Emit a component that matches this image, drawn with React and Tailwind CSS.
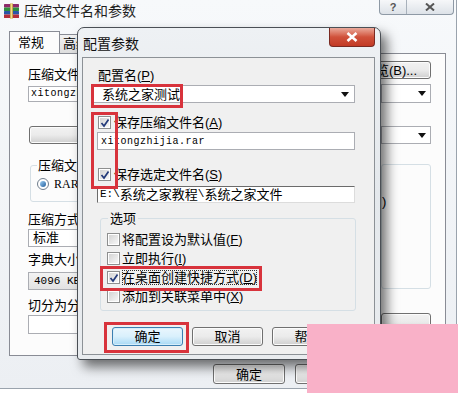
import React from 'react';

const Check = ({ checked }) => (
  <span className="relative w-[13px] h-[13px] shrink-0 border border-[#8e8f8f] bg-white">
    <span className="absolute inset-[1px] bg-gradient-to-br from-[#d4d4d4] to-[#f7f7f7]" />
    {checked && (
      <svg className="absolute left-[1px] top-[1px]" width="10" height="10" viewBox="0 0 10 10">
        <path d="M1.5 5 L4 8 L8.5 1.5" stroke="#233a7a" strokeWidth="1.7" fill="none" />
      </svg>
    )}
  </span>
);

const Btn = ({ children, def, className = '' }) => (
  <div
    className={
      'flex items-center justify-center rounded-[3px] border text-[13px] leading-[15px] text-black ' +
      (def
        ? 'border-[#3c7fb1] bg-gradient-to-b from-[#eaf6fd] via-[#d9f0fc] to-[#a7d9f5] shadow-[inset_0_0_0_1px_#d6eefb] '
        : 'border-[#707070] bg-gradient-to-b from-[#f2f2f2] via-[#ebebeb] to-[#cfcfcf] shadow-[inset_0_0_0_1px_#fcfcfc] ') +
      className
    }
  >
    {children}
  </div>
);

const Arrow = () => (
  <svg width="8" height="5" viewBox="0 0 8 5" className="shrink-0">
    <path d="M0 0 H8 L4 5 Z" fill="#111" />
  </svg>
);

const Mn = ({ c }) => (
  <span>
    (<span className="underline">{c}</span>)
  </span>
);

const RarIcon = () => (
  <svg width="17" height="16" viewBox="0 0 17 16">
    <rect x="1" y="1" width="15" height="3.5" rx="0.6" fill="#8e2a6b" />
    <rect x="1" y="4.5" width="15" height="3.5" rx="0.6" fill="#2f8f3e" />
    <rect x="1" y="8" width="15" height="3.5" rx="0.6" fill="#2b56a8" />
    <rect x="1" y="11.5" width="15" height="3.5" rx="0.6" fill="#b32f3a" />
    <rect x="7" y="0.5" width="3" height="15" fill="#c9a34a" />
    <rect x="7.8" y="0.5" width="1.2" height="15" fill="#f2dc8c" />
  </svg>
);

const Field = ({ className = '', children }) => (
  <div className={'flex items-center border border-[#abadb3] bg-white ' + className}>{children}</div>
);

export default function App() {
  return (
    <div className="relative w-[458px] h-[393px] overflow-hidden bg-white font-['Liberation_Sans','Noto_Sans_CJK_SC',sans-serif] text-black">
      {/* background window, mostly hidden by the dialog */}
      <div className="w-[457px] h-[389px] flex flex-col border-r border-b border-[#9aa3ad] bg-gradient-to-b from-[#f7f9fb] to-[#eceff3]">
        <div className="h-[24px] flex items-start shrink-0">
          <div className="ml-[3px] mt-[3px]">
            <RarIcon />
          </div>
          <span className="ml-[4px] mt-[2px] text-[14px] leading-[18px] text-[#1e1e1e]">压缩文件名和参数</span>
          <div className="ml-auto mr-[2px] flex border border-t-0 border-[#8e99a5] rounded-b-[4px] bg-gradient-to-b from-[#f6f7f9] to-[#dde2e8] h-[15px]">
            <div className="w-[27px] flex items-center justify-center border-r border-[#a8b1bb] text-[11px] leading-[11px] text-[#555] font-bold">?</div>
            <div className="w-[46px] flex items-center justify-center">
              <svg width="10" height="8" viewBox="0 0 10 8">
                <path d="M1 0.5 L9 7.5 M9 0.5 L1 7.5" stroke="#555" strokeWidth="2" />
              </svg>
            </div>
          </div>
        </div>

        <div className="pl-[9px] mt-[7px] w-[77px] overflow-hidden flex items-end h-[22px]">
          <div className="w-[51px] shrink-0 h-[22px] border border-b-0 border-[#898c95] bg-[#fcfcfc] flex items-center pl-[8px] text-[13px]">常规</div>
          <div className="w-[40px] shrink-0 h-[19px] border border-l-0 border-b-0 border-[#898c95] bg-gradient-to-b from-[#f2f2f2] to-[#dedede] flex items-center pl-[3px] text-[13px]">高级</div>
        </div>

        <div className="ml-[9px] w-[437px] h-[303px] border border-[#898c95] bg-[#fcfcfc] flex text-[13px] leading-[16px]">
          <div className="ml-[18px] w-[49px] overflow-hidden flex flex-col">
            <div className="w-[330px] flex flex-col">
              <span className="mt-[13px]">压缩文件名</span>
              <Field className="mt-[3px] h-[16px] pl-[2px]">
                <span className="font-['Liberation_Mono',monospace] text-[10px] tracking-[0.5px]">xitongzhijia.rar</span>
              </Field>
              <Btn className="mt-[24px] ml-[1px] h-[18px]"> </Btn>
              <fieldset className="mt-[14px] ml-[2px] h-[44px] border border-[#d5dfe5] rounded-[3px] px-[6px]">
                <legend className="px-[1px] leading-[15px]">压缩文件格式</legend>
                <div className="flex items-center gap-[5px] mt-[3px]">
                  <span className="w-[12px] h-[12px] rounded-full border border-[#6f7d8c] bg-white flex items-center justify-center">
                    <span className="w-[6px] h-[6px] rounded-full bg-gradient-to-br from-[#9fd0f5] to-[#1f5f9c]" />
                  </span>
                  <span className="font-['Liberation_Serif',serif] text-[12px]">RAR</span>
                </div>
              </fieldset>
              <span className="mt-[10px]">压缩方式</span>
              <Field className="mt-[1px] h-[18px] pl-[4px]">标准</Field>
              <span className="mt-[5px]">字典大小</span>
              <Field className="mt-[4px] h-[18px] pl-[5px] bg-gradient-to-b from-[#f3f3f3] to-[#e2e2e2]">
                <span className="font-['Liberation_Mono',monospace] text-[11px]">4096 KB</span>
              </Field>
              <span className="mt-[8px]">切分为分卷</span>
              <Field className="mt-[1px] h-[19px]" />
            </div>
          </div>
          <div className="ml-auto mr-[14px] w-[50px] overflow-hidden flex flex-col">
            <Btn className="mt-[7px] h-[18px] w-[82px] -ml-[32px] shrink-0">浏览(B)...</Btn>
            <Field className="mt-[5px] h-[19px] justify-end pr-[4px]">
              <Arrow />
            </Field>
            <Field className="mt-[23px] h-[18px] justify-end pr-[4px]">
              <Arrow />
            </Field>
            <div className="mt-[20px] h-[125px] border border-[#d5dfe5] rounded-[3px] flex flex-col items-start pl-[0px]">
              <span className="mt-[29px]">)</span>
            </div>
            <Btn className="mt-[24px] h-[18px]"> </Btn>
          </div>
        </div>

        <div className="flex mt-[8px] ml-[213px] gap-[10px]">
          <Btn className="w-[72px] h-[20px]">确定</Btn>
          <Btn className="w-[72px] h-[20px]"> </Btn>
        </div>
      </div>

      {/* front dialog */}
      <div className="absolute left-[77px] top-[27px] w-[304px] h-[333px] rounded-t-[7px] rounded-b-[3px] border border-[#4a4f55] bg-gradient-to-b from-[#eef1f4] via-[#e4e8ec] to-[#e9ecef] shadow-[6px_7px_12px_rgba(0,0,0,0.55)] flex flex-col">
        <div className="h-[29px] flex items-start justify-between shrink-0">
          <span className="ml-[5px] mt-[8px] text-[14px] leading-[16px] text-[#111]">配置参数</span>
          <div className="mr-[5px] w-[46px] h-[19px] rounded-b-[4px] border border-t-0 border-[#7a2a22] bg-gradient-to-b from-[#e9a99b] via-[#d0513b] to-[#c23a25] flex items-center justify-center">
            <svg width="12" height="10" viewBox="0 0 12 10">
              <path d="M1.5 1 L10.5 9 M10.5 1 L1.5 9" stroke="#fff" strokeWidth="2.6" />
            </svg>
          </div>
        </div>

        <div className="ml-[4px] w-[293px] h-[298px] border border-[#8c9196] bg-[#f0f0f0] flex flex-col text-[13px] leading-[15px]">
          <span className="ml-[15px] mt-[10px]">
            配置名<Mn c="P" />
          </span>
          <Field className="ml-[9px] mt-[2px] w-[263px] h-[18px] pl-[9px] pr-[5px] justify-between">
            <span>系统之家测试</span>
            <Arrow />
          </Field>

          <div className="ml-[15px] mt-[12px] h-[15px] flex items-center gap-[3px]">
            <Check checked />
            <span>
              保存压缩文件名<Mn c="A" />
            </span>
          </div>
          <Field className="ml-[14px] mt-[2px] w-[258px] h-[18px] pl-[3px]">
            <span className="font-['Liberation_Mono',monospace] text-[10px] tracking-[0.5px]">xitongzhijia.rar</span>
          </Field>

          <div className="ml-[15px] mt-[17px] h-[15px] flex items-center gap-[3px]">
            <Check checked />
            <span>
              保存选定文件名<Mn c="S" />
            </span>
          </div>
          <div className="ml-[14px] mt-[4px] w-[258px] h-[17px] flex items-center border border-[#6b6b6b] border-r-[#dcdcdc] border-b-[#dcdcdc] bg-white pl-[2px]">
            <span className="font-['Liberation_Mono',monospace] text-[11px]">{'E:\\'}</span>
            <span>系统之家教程</span>
            <span className="font-['Liberation_Mono',monospace] text-[11px]">{'\\'}</span>
            <span>系统之家文件</span>
          </div>

          <fieldset className="ml-[17px] mt-[8px] w-[256px] h-[100px] border border-[#d5dfe5] rounded-[3px] px-[6px]">
            <legend className="ml-[1px] px-[2px] leading-[15px]">选项</legend>
            <div className="flex flex-col mt-[4px]">
              <div className="h-[19px] flex items-center gap-[2px]">
                <Check />
                <span>
                  将配置设为默认值<Mn c="F" />
                </span>
              </div>
              <div className="h-[19px] flex items-center gap-[2px]">
                <Check />
                <span>
                  立即执行<Mn c="I" />
                </span>
              </div>
              <div className="h-[19px] flex items-center gap-[2px]">
                <Check checked />
                <span className="outline outline-1 outline-dotted outline-[#333] -outline-offset-1">
                  在桌面创建快捷方式<Mn c="D" />
                </span>
              </div>
              <div className="h-[19px] flex items-center gap-[2px]">
                <Check />
                <span>
                  添加到关联菜单中<Mn c="X" />
                </span>
              </div>
            </div>
          </fieldset>

          <div className="ml-[29px] mt-[16px] flex gap-[9px]">
            <Btn def className="w-[71px] h-[19px]">确定</Btn>
            <Btn className="w-[71px] h-[19px]">取消</Btn>
            <Btn className="w-[71px] h-[19px]">帮助</Btn>
          </div>
        </div>
      </div>

      {/* red annotation boxes */}
      <div className="absolute left-[91px] top-[84px] w-[92px] h-[24px] border-[3px] border-[#d8333c]" />
      <div className="absolute left-[91px] top-[112px] w-[27px] h-[77px] border-[3px] border-[#d8333c]" />
      <div className="absolute left-[100px] top-[266px] w-[162px] h-[25px] border-[3px] border-[#d8333c]" />
      <div className="absolute left-[104px] top-[322px] w-[85px] h-[31px] border-[3px] border-[#d8333c]" />

      {/* pink patch */}
      <div className="absolute left-[307px] top-[324px] w-[151px] h-[69px] bg-[#f9b1c8]" />
    </div>
  );
}
